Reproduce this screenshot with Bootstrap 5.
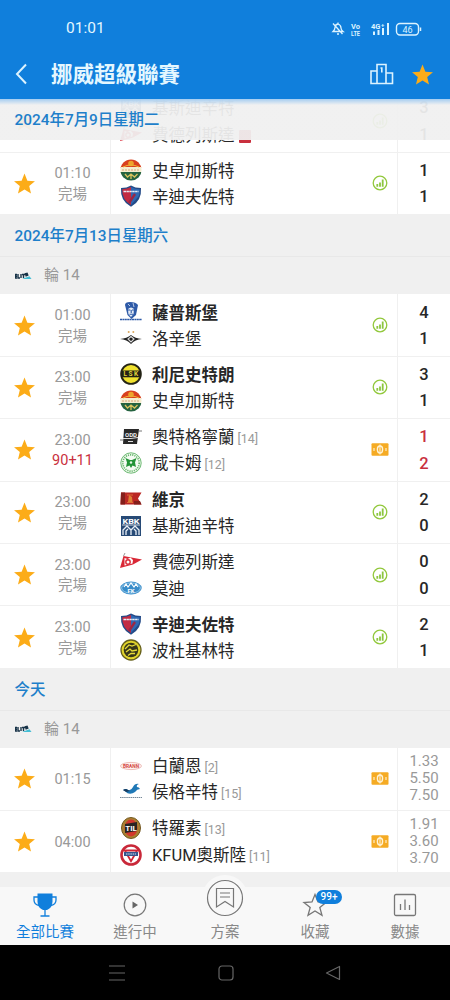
<!DOCTYPE html>
<html lang="zh-Hant">
<head>
    <meta charset="UTF-8">
    <meta name="viewport" content="width=device-width, initial-scale=1.0">
    <title>挪威超級聯賽</title>
    <link href="https://cdn.jsdelivr.net/npm/bootstrap@5.3.0/dist/css/bootstrap.min.css" rel="stylesheet">
    <style>
        body {
            font-family: Roboto, "Noto Sans CJK TC", sans-serif;
            color: #272727;
            background: #fff;
        }
        svg { display: block; flex: none; }
        .phone {
            width: 450px;
            height: 1000px;
            overflow: hidden;
        }
        .top-area {
            height: 99px;
            background: #107fdc;
            color: #e4f7ff;
        }
        .status-line { height: 57px; padding: 1px 28px 0 66px; font-size: 15.5px; }
        .title-line { height: 34px; padding: 0 16px 0 14px; }
        .league-title { font-size: 21.5px; font-weight: 700; line-height: 32px; margin-left: 17px; padding-top: 2px; }
        .match-list { height: 788px; overflow: hidden; background: #f0f0f0; }
        .cut-row { height: 53.5px; overflow: hidden; background: #fff; }
        .date-line {
            height: 41px;
            padding: 3px 0 0 14.5px;
            font-size: 15.4px;
            font-weight: 500;
            color: #1e7fca;
            background: #f0f0f0;
        }
        .date-sticky {
            top: 0;
            left: 0;
            right: 0;
            background: linear-gradient(#a5cdf1, rgba(240, 240, 240, .94) 6px);
        }
        .round-line {
            height: 38.5px;
            padding-left: 15px;
            gap: 12px;
            font-size: 15px;
            color: #999;
            border-top: 1px solid #e8e8e8;
            background: #f0f0f0;
        }
        .match-row {
            height: 62.4px;
            background: #fff;
            border-bottom: 1px solid #f0f0f0;
        }
        .cell-star { width: 48px; }
        .cell-time {
            width: 63px;
            padding: 3px 13px 0 0;
            border-right: 1px solid #f0f0f0;
            color: #999;
            font-size: 14.5px;
            line-height: 20.5px;
        }
        .cell-teams { padding-left: 9px; font-size: 16.5px; line-height: 26.5px; }
        .team-line { height: 26.5px; gap: 10px; white-space: nowrap; }
        .team-name { padding-top: 4px; }
        .team-pos { font-size: 12.5px; color: #999; margin-left: 3px; }
        .cell-mark { width: 36px; border-right: 1px solid #f0f0f0; }
        .cell-score { width: 52px; padding-top: 2px; font-size: 16.5px; font-weight: 500; line-height: 26.5px; }
        .cell-odds { padding-top: 0; font-size: 15px; font-weight: 400; line-height: 17px; color: #999; }
        .live-red { color: #c9303e; }
        .tab-bar { height: 58px; background: #f8f8f8; font-size: 14.5px; color: #888; }
        .tab-link { width: 90px; height: 58px; line-height: 20px; padding-bottom: 2px; gap: 5px; }
        .tab-on { color: #107fdc; }
        .plan-icon { margin-top: -12px; margin-bottom: 1px; background: #f8f8f8; border-radius: 50%; box-shadow: 0 0 0 4px #f8f8f8; }
        .count-pill {
            left: 14px;
            top: -2px;
            width: 26px;
            height: 14px;
            font-size: 10px;
            font-weight: 500;
            line-height: 14px;
            border-radius: 7px;
            color: #fff;
            background: #107fdc;
        }
        .sys-bar { height: 55px; background: #000; padding: 0 109px 0 108px; }
    </style>
</head>
<body>

    <svg width="0" height="0" class="position-absolute">
        <defs>
            <symbol id="star" viewBox="0 0 24 24"><path fill="#fcac18" d="M12 1.6l3 7.4 7.9.6-6 5.1 1.9 7.7-6.8-4.2-6.8 4.2 1.9-7.7-6-5.1L9 9z"/></symbol>
            <symbol id="stat" viewBox="0 0 16 16"><circle cx="8" cy="8" r="6.8" fill="none" stroke="#92c83c" stroke-width="1.3"/><path stroke="#8cc63f" stroke-width="1.8" d="M5.3 11.8V9M8 11.8V7.500M10.700 11.800V4.500"/></symbol>
            <symbol id="bet" viewBox="0 0 18 13"><rect x=".5" y=".3" width="17" height="12.400" rx="1" fill="#f5ab24"/><ellipse cx="9" cy="6.500" rx="2.600" ry="3.500" fill="none" stroke="#fff3d6" stroke-width="1.400"/><path d="M9 1.400v10.200M3 5v3M15 5v3" stroke="#fff3d6" stroke-width="1.100"/></symbol>
            <symbol id="eliteserien" viewBox="0 0 17 10"><path d="M0 3.500h2M0 5.200h2M0 7h2M.5 3v4M3 3v4h2M6 3v4M7 3.500h3M8.500 3v4" stroke="#173247" stroke-width="1.400" fill="none"/><path d="M9.500 2.200l3-.8 1.200 3-3 1.400z" fill="#173247"/><path d="M7.500 7.800l7-2.500 2 2.700H8z" fill="#44bdd4"/></symbol>

            <symbol id="stromsgodset" viewBox="0 0 22 22"><clipPath id="c1"><circle cx="11" cy="11" r="10.600"/></clipPath><g clip-path="url(#c1)"><path fill="#d9401f" d="M0 0h22v9H0z"/><path fill="#f5edcf" d="M0 8h22v6H0z"/><path fill="#256340" d="M0 13h22v9H0z"/><circle cx="11" cy="4.500" r="2.800" fill="#eda32b"/><path d="M3 8q8-4 16 0" stroke="#f0b235" fill="none"/><path stroke="#d8a57a" stroke-dasharray="2 1" d="M2 11h18"/><path d="M5 15l2.500 3 3.500-3 3.500 3 3-3M11 15v5" stroke="#d8c25c" stroke-width="1.300" fill="none"/></g></symbol>
            <symbol id="sandefjord" viewBox="0 0 22 22"><path fill="#244a87" d="M1 3Q7 3 11 .5 15 3 21 3 22 16 11 21.700 0 16 1 3z"/><path fill="#c22b43" d="M2.200 4.300Q7.500 4 11 2v18Q2 15 2.200 4.300z"/><path fill="#2f68b2" d="M11 2q4 2.200 8.700 2.300.1 4-1 7L11 20z"/><path stroke="#e7ebf5" stroke-width="1.700" stroke-dasharray="2.500 .4" d="M3.500 6.500h15"/><path d="M15 9l-6 9" stroke="#9b2744" stroke-width="2.300"/></symbol>
            <symbol id="sarpsborg" viewBox="0 0 22 22"><path fill="#2e5aa7" d="M5 4q0-3 5-3 6 0 8 3l-2 10-4.500 4-4-4z"/><path fill="#e5ecf6" d="M8 8q3-3 6 0l-.5 5-2.500 3-2.600-3z"/><path stroke="#2e5aa7" d="M8 9h2.300M12 9h2.300M9.500 13.200h3.500M11.200 9v3" stroke-width="1.100"/><path stroke="#dce6f5" d="M8 3l2 2M13 2l1 4" stroke-width=".8"/><path stroke="#2e5aa7" stroke-width="1.700" stroke-dasharray="2 .4" d="M0 18.500h22"/></symbol>
            <symbol id="rosenborg" viewBox="0 0 22 22"><path fill="#222" d="M0 12Q7 11.500 11 8q4 3.500 11 4-7 .5-11 5-4-4.500-11-5z"/><path fill="none" stroke="#ddd" stroke-width="1.100" d="M11 9.500l3 2.500-3 3-3-3z"/><circle cx="8.700" cy="5" r="1" fill="#dca85e"/><circle cx="13.300" cy="5" r="1" fill="#dca85e"/></symbol>
            <symbol id="lillestrom" viewBox="0 0 22 22"><circle cx="11" cy="11" r="9.900" fill="#f0e12f" stroke="#252415" stroke-width="1.800"/><path fill="#222115" d="M1 7.500h20v6.800H1z"/><text x="11.500" y="13.300" text-anchor="middle" font-size="6.500" font-weight="700" letter-spacing="1.500" fill="#e0d33b">LSK</text></symbol>
            <symbol id="odd" viewBox="0 0 22 22"><path fill="#292929" d="M4 3h15l-2 15H3z"/><text x="11" y="10.500" text-anchor="middle" font-size="6" font-weight="700" fill="#eee">ODD</text><path stroke="#ddd" d="M3 12.500h8l7-1M8 15.500h5" fill="none"/><path stroke="#777" d="M0 14h3M19 5h3"/></symbol>
            <symbol id="hamkam" viewBox="0 0 22 22"><circle cx="11" cy="11" r="10.200" fill="#f5fbf3" stroke="#5cb163" stroke-width=".9"/><circle cx="11" cy="11" r="8.200" fill="none" stroke="#69b96e" stroke-width="1.700" stroke-dasharray="1.200 1"/><path fill="#239437" d="M5.500 6L10 8h2l4.500-2-1.500 4.500 1 4.500-3.500-1.500L11 16l-1.500-2.500L6 15l1-4.500z"/><circle cx="11" cy="10.500" r="1.200" fill="#e8f5e8"/></symbol>
            <symbol id="viking" viewBox="0 0 22 22"><path fill="#ba2724" d="M1 4.500h20.500l-3.500 6 3.500 6H.500z"/><path fill="#841f1b" d="M1 4.500h4v12H.500zM14 13h6l1.500 3.500H14z"/><path d="M8 14l1-7 3 2 .5 5z" fill="#dd8134"/><path d="M7 7h6M7 14.500h6" stroke="#de6c34"/></symbol>
            <symbol id="kristiansund" viewBox="0 0 22 22"><path fill="#274a76" d="M1 1h20v20H1z"/><text x="2.500" y="9" font-size="8" font-weight="700" fill="#fff" textLength="17" lengthAdjust="spacingAndGlyphs">KBK</text><path d="M3 20v-5l4-4 4 4 4-4 4 4v5M6 20v-4l2-2M16 20v-4l-2-2M11 20v-5" stroke="#e8eff7" stroke-width="1.300" fill="none"/><path stroke="#fff" d="M2 10h18" stroke-width=".8"/></symbol>
            <symbol id="fredrikstad" viewBox="0 0 22 22"><path fill="#d92836" d="M0 18L3.500 6l18.500 3.500-9 5z"/><path fill="#fff" d="M4.500 8l3 1 3-1.500 2.500 2.500-.5 3.500-8 2z"/><circle cx="8" cy="12" r="2.200" fill="none" stroke="#d92836" stroke-width="1.400"/><path d="M3.500 6l1.500-3" stroke="#999"/></symbol>
            <symbol id="molde" viewBox="0 0 22 22"><ellipse cx="11" cy="11" rx="10.700" ry="6.400" fill="#388cc9"/><ellipse cx="11" cy="11" rx="9.400" ry="5.100" fill="none" stroke="#a9d3ed" stroke-width=".8"/><path d="M4 10l2-3 2 3 3-4 3 4 2-3 2 3" fill="none" stroke="#fff" stroke-width="1.200"/><text x="11" y="16" text-anchor="middle" font-size="6" font-weight="700" fill="#fff">FK</text></symbol>
            <symbol id="bodo" viewBox="0 0 22 22"><circle cx="11" cy="11" r="10" fill="#e2d52b" stroke="#66601c" stroke-width="1.300"/><circle cx="11" cy="11" r="7.300" fill="#383719"/><path d="M5 10l4-4 3 1 4-1.500M6 13l4-3 2 2 5-1M8 16.500l3-2h4" stroke="#e5da39" stroke-width="1.300" fill="none"/></symbol>
            <symbol id="brann" viewBox="0 0 22 22"><ellipse cx="11" cy="11" rx="10.500" ry="3.600" fill="#fff3f1" stroke="#e9b0aa" stroke-width=".8"/><text x="11" y="12.800" text-anchor="middle" font-size="4.800" font-weight="700" fill="#d3473e">BRANN</text></symbol>
            <symbol id="haugesund" viewBox="0 0 22 22"><path fill="#1f78b6" d="M3 9q3-2 5 0 3 1 5-3 2-4 6-3-3 1-2 3 2 0 3 2-3 0-5 3-4 3-8 1-1-2-4-3z"/><path fill="#173d60" d="M3 9q3-2 5 0l2 1-4 1z"/><path stroke="#758898" stroke-width="1.200" stroke-dasharray="1.500 .6" d="M0 16.500h22"/></symbol>
            <symbol id="tromso" viewBox="0 0 22 22"><ellipse cx="11" cy="11" rx="9.500" ry="10.500" fill="#a98031" stroke="#735821"/><ellipse cx="11" cy="11" rx="6.500" ry="8.500" fill="#d1372d"/><path fill="#292521" d="M5 7l12-2v9L5 16z"/><text x="11" y="13.500" text-anchor="middle" font-size="8" font-weight="700" fill="#fff">TIL</text></symbol>
            <symbol id="kfum" viewBox="0 0 22 22"><circle cx="11" cy="11" r="9.500" fill="#fff" stroke="#c92839" stroke-width="2.600"/><path fill="#fff" stroke="#cf2638" stroke-width="1.800" d="M4.800 6.500h12.400L11 17.200z"/><path fill="#35558d" d="M4 8h14v4H4z"/><path stroke="#d3def0" stroke-width="1" stroke-dasharray="1.500 .7" d="M6 10h10"/></symbol>
        </defs>
    </svg>

    <div class="phone mx-auto">
        <header class="top-area">
            <div class="status-line d-flex align-items-center">
                <span class="me-auto">01:01</span>
                <svg width="92" height="18" viewBox="0 0 92 18" fill="none" stroke="#dcf3ff" stroke-width="1.300">
                    <path d="M3 11.500q2-2 2-4 0-3 3-3.500 3 1 3 4 0 2 2 3.500zM7 14h2M3 3.500l9.500 10.500M8 2.500V4"/>
                    <g fill="#dcf3ff" stroke="none" font-weight="700">
                        <text x="21" y="8.500" font-size="8" textLength="9" lengthAdjust="spacingAndGlyphs">Vo</text>
                        <text x="21" y="15.500" font-size="8" textLength="9" lengthAdjust="spacingAndGlyphs">LTE</text>
                        <text x="41" y="8.500" font-size="7.500">4G</text>
                        <text x="51" y="6.500" font-size="6">+</text>
                        <text x="77.500" y="12.500" font-size="9" font-weight="400" text-anchor="middle">46</text>
                    </g>
                    <path stroke-width="2" d="M44 15v-3.500M48.500 15v-5M53 15V8M58 15V3"/>
                    <rect x="66.500" y="3.500" width="22" height="11.500" rx="3.500" stroke-width="1.400"/>
                    <path d="M90.500 7.500v3.500" stroke-width="1.500"/>
                </svg>
            </div>
            <div class="title-line d-flex align-items-center">
                <svg width="20" height="24" viewBox="0 0 20 24" fill="none" stroke="#dcf3ff" stroke-width="2"><path d="M12 2.500L3 12l9 9.500"/></svg>
                <span class="league-title me-auto">挪威超級聯賽</span>
                <svg width="26" height="24" viewBox="0 0 26 24" fill="none" stroke="#dcf3ff" stroke-width="1.600"><path d="M8 21.500H2V9h6M8 21.500V2.500h9v19zM17 11h6.500v10.500H17M11.500 6h1.300v4.500M8 21.500h9"/></svg>
                <svg class="ms-3" width="23" height="23"><use href="#star"/></svg>
            </div>
        </header>

        <main class="match-list position-relative">
            <div class="cut-row d-flex align-items-end" data-match="0"></div>
            <div class="date-line date-sticky position-absolute d-flex align-items-center">2024年7月9日星期二</div>
            <div data-match="1"></div>
            <div class="date-line d-flex align-items-center">2024年7月13日星期六</div>
            <div class="round-line d-flex align-items-center"><svg width="17" height="10"><use href="#eliteserien"/></svg>輪 14</div>
            <div data-match="2"></div>
            <div data-match="3"></div>
            <div data-match="4"></div>
            <div data-match="5"></div>
            <div data-match="6"></div>
            <div data-match="7"></div>
            <div class="date-line d-flex align-items-center">今天</div>
            <div class="round-line d-flex align-items-center"><svg width="17" height="10"><use href="#eliteserien"/></svg>輪 14</div>
            <div data-match="8"></div>
            <div data-match="9"></div>
        </main>

        <nav class="tab-bar d-flex position-relative">
            <div class="tab-link tab-on d-flex flex-column align-items-center justify-content-end">
                <svg width="26" height="26" viewBox="0 0 26 26"><path fill="#107fdc" d="M5.500 1.500h15v8q0 6-5.500 8.500h-4q-5.500-2.500-5.500-8.500z"/><path fill="none" stroke="#107fdc" stroke-width="1.300" d="M6 5H2v3q0 4.500 5 5.500M20 5h4v3q0 4.500-5 5.500M13 17v7M8.500 24h9"/></svg>
                <span>全部比賽</span>
            </div>
            <div class="tab-link d-flex flex-column align-items-center justify-content-end">
                <svg width="26" height="26" viewBox="0 0 26 26"><circle cx="13" cy="13" r="10.800" fill="none" stroke="#777" stroke-width="1.200"/><path fill="#666" d="M10.500 9.500l5.500 3.500-5.500 3.500z"/></svg>
                <span>進行中</span>
            </div>
            <div class="tab-link d-flex flex-column align-items-center justify-content-end">
                <svg class="plan-icon" width="38" height="38" viewBox="0 0 38 38" fill="none" stroke="#777" stroke-width="1.200"><circle cx="19" cy="19" r="17.500"/><path d="M10.500 9.500h17V28L19 22.500 10.500 28zM14 14h10M14 18h10"/></svg>
                <span>方案</span>
            </div>
            <div class="tab-link d-flex flex-column align-items-center justify-content-end">
                <div class="position-relative">
                    <svg width="26" height="26" viewBox="0 0 26 26" fill="none" stroke="#777" stroke-width="1.300"><path d="M13 2.500l3 7.500 8 .5-6.200 5 2.200 7.800-7-4.300-7 4.300 2.200-7.800-6.200-5 8-.5z"/></svg>
                    <span class="count-pill position-absolute text-center">99+</span>
                </div>
                <span>收藏</span>
            </div>
            <div class="tab-link d-flex flex-column align-items-center justify-content-end">
                <svg width="26" height="26" viewBox="0 0 26 26" fill="none" stroke="#777" stroke-width="1.300"><rect x="2.500" y="2.500" width="21" height="21" rx="1.500"/><path d="M8.500 18v-6M13 18V7.500M17.500 18v-5"/></svg>
                <span>數據</span>
            </div>
        </nav>

        <footer class="sys-bar d-flex align-items-center justify-content-between">
            <svg width="18" height="16" viewBox="0 0 18 16" stroke="#666" stroke-width="1.200"><path d="M1 1h16M1 8h16M1 15h16"/></svg>
            <svg width="16" height="16" viewBox="0 0 16 16" fill="none" stroke="#666" stroke-width="1.200"><rect x="1" y="1" width="14" height="14" rx="3"/></svg>
            <svg width="16" height="16" viewBox="0 0 16 16" fill="none" stroke="#666" stroke-width="1.200"><path d="M14.500 1.500v13L1.500 8z" stroke-linejoin="round"/></svg>
        </footer>
    </div>

    <script>
        // teams: [logo, name, table position]; win: index of the bold team
        const matches = [
            { time: '', teams: [['kristiansund', '基斯迪辛特'], ['fredrikstad', '費德列斯達']], score: [3, 1], redCard: true },
            { time: '01:10', state: '完場', teams: [['stromsgodset', '史卓加斯特'], ['sandefjord', '辛迪夫佐特']], score: [1, 1] },
            { time: '01:00', state: '完場', teams: [['sarpsborg', '薩普斯堡'], ['rosenborg', '洛辛堡']], score: [4, 1], win: 0 },
            { time: '23:00', state: '完場', teams: [['lillestrom', '利尼史特朗'], ['stromsgodset', '史卓加斯特']], score: [3, 1], win: 0 },
            { time: '23:00', state: '90+11', teams: [['odd', '奧特格寧蘭', 14], ['hamkam', '咸卡姆', 12]], score: [1, 2], live: true },
            { time: '23:00', state: '完場', teams: [['viking', '維京'], ['kristiansund', '基斯迪辛特']], score: [2, 0], win: 0 },
            { time: '23:00', state: '完場', teams: [['fredrikstad', '費德列斯達'], ['molde', '莫迪']], score: [0, 0] },
            { time: '23:00', state: '完場', teams: [['sandefjord', '辛迪夫佐特'], ['bodo', '波杜基林特']], score: [2, 1], win: 0 },
            { time: '01:15', teams: [['brann', '白蘭恩', 2], ['haugesund', '侯格辛特', 15]], odds: ['1.33', '5.50', '7.50'] },
            { time: '04:00', teams: [['tromso', '特羅素', 13], ['kfum', 'KFUM奧斯陸', 11]], odds: ['1.91', '3.60', '3.70'] }
        ];

        function teamLine(m, i) {
            const [logo, name, pos] = m.teams[i];
            const card = m.redCard && i === 1 ? '<svg class="d-inline-block ms-1" width="12" height="13"><rect width="12" height="13" rx="1" fill="#c9303e"/></svg>' : '';
            return `<div class="team-line d-flex align-items-center">
                <svg width="22" height="22"><use href="#${logo}"/></svg>
                <span class="team-name ${m.win === i ? 'fw-bold' : ''}">${name}${pos ? `<span class="team-pos">[${pos}]</span>` : ''}${card}</span>
            </div>`;
        }

        function matchRow(m) {
            const mark = m.live || m.odds
                ? '<svg width="18" height="13"><use href="#bet"/></svg>'
                : '<svg width="16" height="16"><use href="#stat"/></svg>';
            const right = m.odds
                ? `<div class="cell-score cell-odds text-center">${m.odds.join('<br>')}</div>`
                : `<div class="cell-score text-center ${m.live ? 'live-red' : ''}">${m.score.join('<br>')}</div>`;
            return `<div class="match-row w-100 flex-shrink-0 d-flex align-items-center">
                <div class="cell-star d-flex justify-content-center"><svg width="23" height="23"><use href="#star"/></svg></div>
                <div class="cell-time h-100 d-flex flex-column justify-content-center text-center">
                    <span class="text-nowrap">${m.time}</span>${m.state ? `<span class="${m.live ? 'live-red' : ''}">${m.state}</span>` : ''}
                </div>
                <div class="cell-teams flex-grow-1">${teamLine(m, 0)}${teamLine(m, 1)}</div>
                <div class="cell-mark h-100 d-flex align-items-center justify-content-center">${mark}</div>
                ${right}
            </div>`;
        }

        document.querySelectorAll('[data-match]').forEach(el => {
            el.innerHTML = matchRow(matches[el.dataset.match]);
        });
    </script>
    <script src="https://cdn.jsdelivr.net/npm/bootstrap@5.3.0/dist/js/bootstrap.bundle.min.js"></script>

</body>
</html>
